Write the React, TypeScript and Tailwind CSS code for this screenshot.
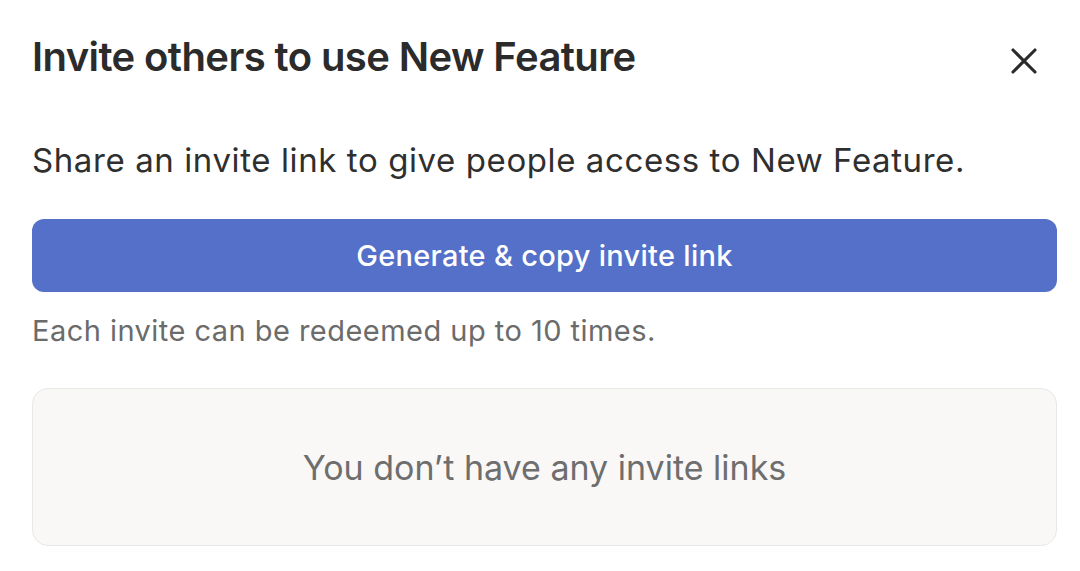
import { X } from 'lucide-react';

export default function App() {
  return (
    <div className="min-h-screen bg-white font-['Inter',sans-serif] text-[#2b2b2b] pl-8 pr-[23px] pt-[33px]">
      <div className="flex items-start justify-between">
        <h1 className="text-[40px] leading-[48px] font-semibold tracking-[-0.015em]">
          Invite others to use New Feature
        </h1>
        <button className="mt-[4px] mr-[9px] w-12 h-12 flex items-center justify-center text-[#2b2b2b]">
          <X size={44} strokeWidth={1.7} />
        </button>
      </div>

      <p className="mt-[53px] text-[33px] leading-[44px] tracking-[0.018em] text-[#2f2f2f]">
        Share an invite link to give people access to New Feature.
      </p>

      <button className="mt-[37px] w-full h-[73px] rounded-[12px] bg-[#5470c8] text-white text-[29px] tracking-[0.01em] font-medium flex items-center justify-center">
        Generate &amp; copy invite link
      </button>

      <p className="mt-[19px] text-[29px] leading-[40px] tracking-[0.016em] text-[#6b6b6b]">
        Each invite can be redeemed up to 10 times.
      </p>

      <div className="mt-[37px] h-[158px] rounded-[16px] border-[1.5px] border-[#e8e8e6] bg-[#f9f8f7] flex items-center justify-center">
        <span className="text-[34px] text-[#6e6e6e]">You don’t have any invite links</span>
      </div>
    </div>
  );
}
